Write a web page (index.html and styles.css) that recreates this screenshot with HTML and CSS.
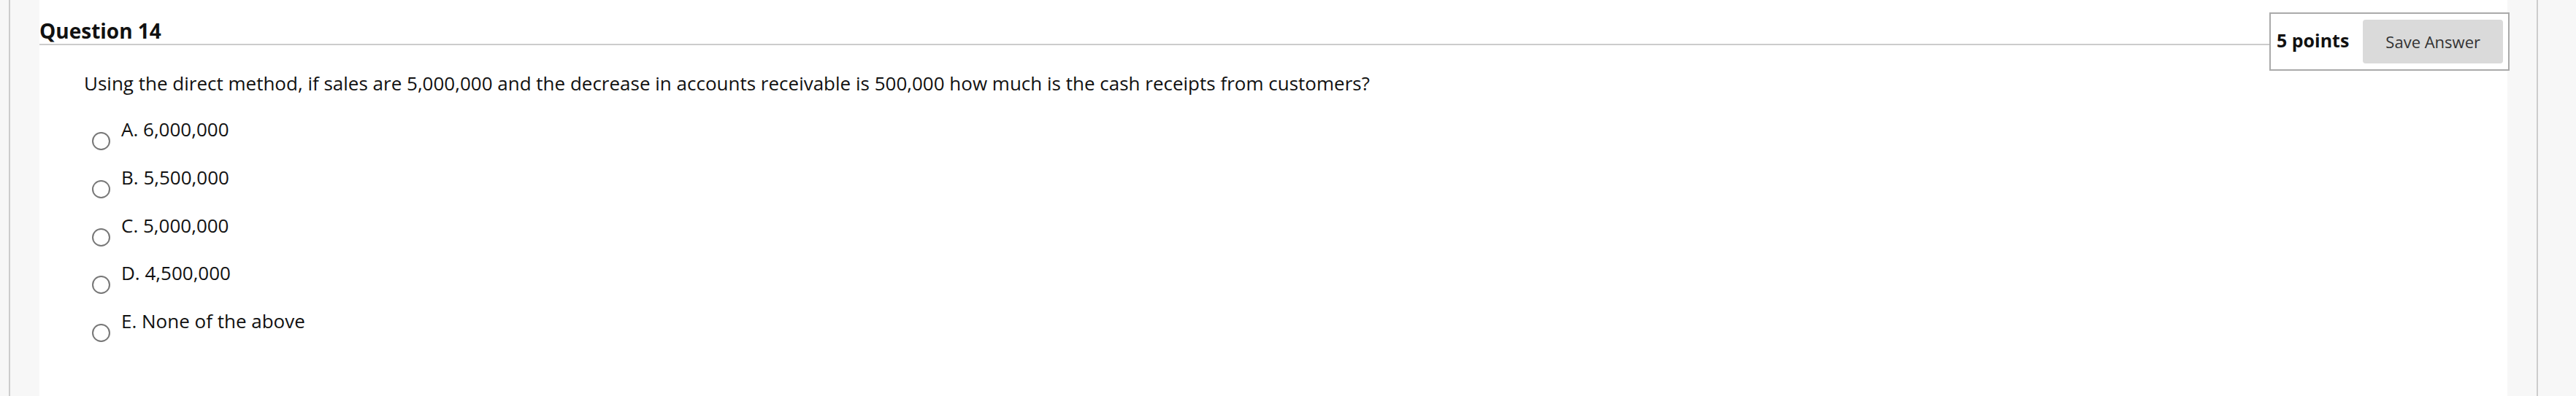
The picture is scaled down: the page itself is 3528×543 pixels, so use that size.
FILE: index.html
```html
<!DOCTYPE html>
<html lang="en">
<head>
<meta charset="UTF-8">
<title>Question 14</title>
<link rel="stylesheet" href="styles.css">
</head>
<body>

<div class="page">
  <div class="rail rail-left"></div>

  <div class="content">
    <div class="question-header">
      <h2 class="question-title">Question 14</h2>
      <div class="points-box">
        <span class="points">5 points</span>
        <button class="save-button">Save Answer</button>
      </div>
    </div>

    <p class="question-text">Using the direct method, if sales are 5,000,000 and the decrease in accounts receivable is 500,000 how much is the cash receipts from customers?</p>

    <ul class="options">
      <li class="option"><span class="radio"></span><span class="label">A. 6,000,000</span></li>
      <li class="option"><span class="radio"></span><span class="label">B. 5,500,000</span></li>
      <li class="option"><span class="radio"></span><span class="label">C. 5,000,000</span></li>
      <li class="option"><span class="radio"></span><span class="label">D. 4,500,000</span></li>
      <li class="option"><span class="radio"></span><span class="label">E. None of the above</span></li>
    </ul>
  </div>

  <div class="rail rail-right"></div>
</div>

</body>
</html>
```

FILE: styles.css
```css
body {
  font-family: "Open Sans", Arial, sans-serif;
  margin: 0;
  padding: 0;
  background-color: #f7f7f7;
  color: #111;
}
.page {
  display: flex;
  min-height: 543px;
}
.rail {
  width: 40px;
}
.rail-left {
  margin-left: 12px;
  border-left: 2px solid #ccc;
}
.rail-right {
  margin-right: 52px;
  border-right: 2px solid #ccc;
}
.content {
  flex: 1;
  background-color: #fff;
}
.question-header {
  display: flex;
  align-items: flex-start;
  padding-top: 17px;
  margin-right: -3px;
}
.question-title {
  flex: 1;
  margin: 8px 0 0 0;
  padding-bottom: 1px;
  font-size: 28px;
  line-height: 34px;
  font-weight: 700;
  border-bottom: 2px solid #ccc;
}
.points-box {
  display: flex;
  align-items: center;
  gap: 19px;
  padding: 8px 7px 8px 8px;
  border: 2px solid #aaa;
  background-color: #fff;
}
.points {
  font-size: 25px;
  font-weight: 700;
  line-height: 30px;
  position: relative;
  top: -2px;
}
.save-button {
  height: 60px;
  padding: 0 31px;
  border: none;
  border-radius: 4px;
  background-color: #dadada;
  color: #333;
  font-family: inherit;
  font-size: 22px;
}
.question-text {
  margin: 0 0 0 61px;
  font-size: 26px;
  line-height: 34px;
}
.options {
  list-style: none;
  margin: 29px 0 0 72px;
  padding: 0;
}
.option {
  display: flex;
  align-items: flex-start;
  gap: 15px;
  margin-bottom: 19.8px;
}
.radio {
  width: 25px;
  height: 25px;
  margin-top: 21px;
  box-sizing: border-box;
  border: 2px solid #777;
  border-radius: 50%;
}
.label {
  font-size: 26px;
  line-height: 34px;
}
```
